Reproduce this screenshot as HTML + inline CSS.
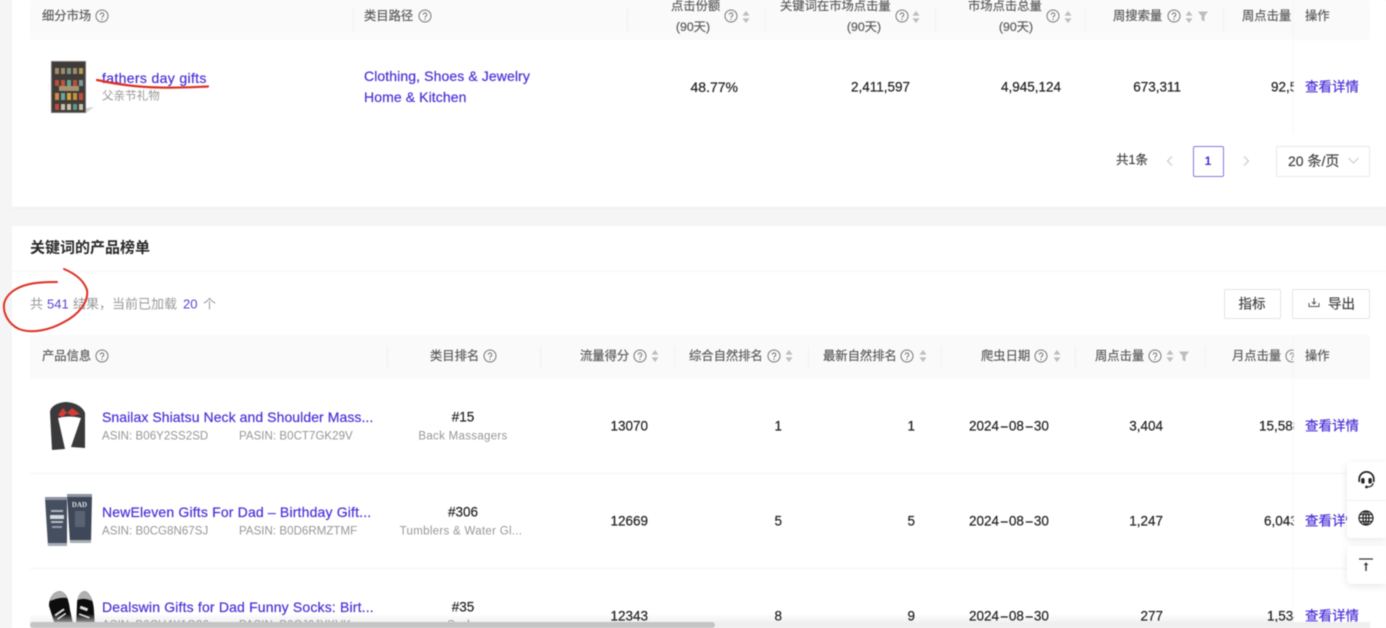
<!DOCTYPE html>
<html lang="zh"><head><meta charset="utf-8"><title>关键词的产品榜单</title>
<style>
*{box-sizing:border-box}
html,body{margin:0;padding:0;width:1386px;height:628px;overflow:hidden;background:#f5f5f5}
body{position:relative;font-family:"Liberation Sans","Noto Sans CJK SC",sans-serif;font-size:13px;color:#333}
#w{position:absolute;left:0;top:0;width:1386px;height:628px;overflow:hidden;filter:blur(.4px)}
.b{position:absolute}
.t{position:absolute;white-space:nowrap;line-height:1;transform:translateY(-50%);-webkit-text-stroke:.2px currentColor}
.c{transform:translate(-50%,-50%)}
.r{transform:translate(-100%,-50%)}
.h{color:#5c5c5c;font-size:12.3px}
.l{color:#4a2fd6;font-size:13.5px}
.g{color:#969696;font-size:11.5px;letter-spacing:.05px;-webkit-text-stroke:0}
.n{color:#222;font-size:13.5px}
.ti{font-size:14px;letter-spacing:.07px}
.dt i{font-style:normal;display:inline-block;transform:scaleX(2);margin:0 2.7px}
.d{position:absolute;width:1px;background:#f1f1f1}
svg{position:absolute;overflow:visible}
</style></head><body><div id="w">
<svg width="0" height="0" style="position:absolute"><defs>
<g id="q"><circle cx="6" cy="6" r="6" fill="none" stroke="#777" stroke-width="1"/><path d="M4.2 4.7a1.8 1.8 0 1 1 2.8 1.5c-.7.45-1 .8-1 1.5" fill="none" stroke="#777" stroke-width="1"/><circle cx="6" cy="9.3" r=".65" fill="#777"/></g>
<g id="s"><path d="M4 0 7.5 4.6H.5z" fill="#bdbdbd"/><path d="M4 12 .5 7.4h7z" fill="#bdbdbd"/></g>
<g id="f"><path d="M0 .5h10L6.5 5v5.5L3.5 9V5z" fill="#bdbdbd"/></g>
</defs></svg>

<!-- cards -->
<div class="b" style="left:12px;top:0;width:1374px;height:207px;background:#fff;box-shadow:0 1px 2px #eee"></div>
<div class="b" style="left:12px;top:226px;width:1374px;height:402px;background:#fff"></div>

<!-- table 1 header -->
<div class="b" style="left:30px;top:0;width:1340px;height:40px;background:#fafafa"></div>
<div class="d" style="left:353px;top:8px;height:24px"></div>
<div class="d" style="left:627px;top:8px;height:24px"></div>
<div class="d" style="left:765px;top:8px;height:24px"></div>
<div class="d" style="left:935px;top:8px;height:24px"></div>
<div class="d" style="left:1085px;top:8px;height:24px"></div>
<div class="d" style="left:1223px;top:8px;height:24px"></div>
<span class="t h" style="left:42px;top:16px">细分市场</span><svg style="left:96px;top:10px" width="12" height="12"><use href="#q"/></svg>
<span class="t h" style="left:364px;top:16px">类目路径</span><svg style="left:419px;top:10px" width="12" height="12"><use href="#q"/></svg>
<span class="t h" style="left:671px;top:6px">点击份额</span><span class="t h c" style="left:693px;top:27px">(90天)</span>
<svg style="left:725px;top:10px" width="12" height="12"><use href="#q"/></svg><svg style="left:742px;top:11px" width="8" height="12"><use href="#s"/></svg>
<span class="t h" style="left:780px;top:6px">关键词在市场点击量</span><span class="t h c" style="left:864px;top:27px">(90天)</span>
<svg style="left:896px;top:10px" width="12" height="12"><use href="#q"/></svg><svg style="left:912px;top:11px" width="8" height="12"><use href="#s"/></svg>
<span class="t h" style="left:968px;top:6px">市场点击总量</span><span class="t h c" style="left:1016px;top:27px">(90天)</span>
<svg style="left:1047px;top:10px" width="12" height="12"><use href="#q"/></svg><svg style="left:1064px;top:11px" width="8" height="12"><use href="#s"/></svg>
<span class="t h" style="left:1113px;top:16px">周搜索量</span><svg style="left:1168px;top:10px" width="12" height="12"><use href="#q"/></svg><svg style="left:1185px;top:11px" width="8" height="12"><use href="#s"/></svg><svg style="left:1198px;top:11px" width="10" height="11"><use href="#f"/></svg>
<span class="t h" style="left:1242px;top:16px">周点击量</span>

<!-- table 1 row -->
<svg style="left:51px;top:61px" width="42" height="54" viewBox="0 0 42 54">
<path d="M35 47 43 46 35 52z" fill="#d4d4d4"/>
<rect width="35" height="52" fill="#3f3b38"/>
<rect x=".5" y=".5" width="34" height="51" fill="none" stroke="#77726e"/>
<g fill="#a08c6c"><rect x="4" y="7" width="4" height="6"/><rect x="10" y="7" width="4" height="6"/><rect x="16" y="7" width="4" height="6" fill="#7f9484"/><rect x="22" y="7" width="4" height="6"/><rect x="28" y="7" width="4" height="6" fill="#b4985a"/></g>
<g><rect x="4" y="19" width="4" height="6" fill="#b8503c"/><rect x="10" y="19" width="4" height="6" fill="#c0563c"/><rect x="16" y="19" width="4" height="6" fill="#5ea79a"/><rect x="22" y="19" width="4" height="6" fill="#b8503c"/><rect x="28" y="19" width="4" height="6" fill="#7f9aa0"/></g>
<rect x="8" y="25" width="20" height="5" fill="#a89270"/>
<g><rect x="4" y="32" width="4" height="7" fill="#d08a4a"/><rect x="10" y="32" width="4" height="7" fill="#6aa6a0"/><rect x="16" y="32" width="4" height="7" fill="#d0a63c"/><rect x="22" y="32" width="4" height="7" fill="#c9913c"/><rect x="28" y="32" width="4" height="7" fill="#c0503c"/></g>
<g><rect x="4" y="43" width="4" height="6" fill="#c04a3c"/><rect x="10" y="43" width="4" height="6" fill="#c9c0a8"/><rect x="16" y="43" width="4" height="6" fill="#c9c0a8"/><rect x="22" y="43" width="4" height="6" fill="#5e9a90"/><rect x="28" y="43" width="4" height="6" fill="#c9c0a8"/></g>
</svg>
<span class="t l ti" style="left:102px;top:78px;letter-spacing:.35px">fathers day gifts</span>
<span class="t g" style="left:102px;top:97px">父亲节礼物</span>
<span class="t l ti" style="left:364px;top:76px;letter-spacing:.1px">Clothing, Shoes &amp; Jewelry</span>
<span class="t l ti" style="left:364px;top:97px;letter-spacing:.1px">Home &amp; Kitchen</span>
<span class="t r n" style="left:738px;top:87px;font-size:14px">48.77%</span>
<span class="t r n" style="left:910px;top:87px">2,411,597</span>
<span class="t r n" style="left:1061px;top:87px">4,945,124</span>
<span class="t r n" style="left:1181px;top:87px">673,311</span>
<span class="t n" style="left:1271px;top:87px">92,580</span>

<!-- sticky 1 -->
<div class="b" style="left:1294px;top:40px;width:92px;height:95px;background:#fff;box-shadow:-2px 0 4px -2px #f4f4f4"></div>
<div class="b" style="left:1294px;top:0;width:76px;height:40px;background:#fafafa;box-shadow:-2px 0 4px -2px #f0f0f0"></div>
<span class="t h" style="left:1305px;top:16px">操作</span>
<span class="t l" style="left:1305px;top:87px">查看详情</span>

<!-- pagination -->
<span class="t" style="left:1116px;top:160px;font-size:12.5px;color:#444">共1条</span>
<svg style="left:1166px;top:156px" width="8" height="10"><path d="M6 .5 1.5 5 6 9.5" fill="none" stroke="#c4c4c4" stroke-width="1"/></svg>
<div class="b" style="left:1193px;top:146px;width:31px;height:31px;border:1px solid #8a76e0;border-radius:2px;background:#fff"></div>
<span class="t c l" style="left:1208px;top:161px;font-weight:bold;font-size:12px;-webkit-text-stroke:0">1</span>
<svg style="left:1242px;top:156px" width="8" height="10"><path d="M2 .5 6.5 5 2 9.5" fill="none" stroke="#c4c4c4" stroke-width="1"/></svg>
<div class="b" style="left:1276px;top:146px;width:94px;height:31px;border:1px solid #e8e8e8;border-radius:2px;background:#fff"></div>
<span class="t" style="left:1288px;top:161px;font-size:14px;color:#444">20 条/页</span>
<svg style="left:1348px;top:157px" width="11" height="7"><path d="M.5 1 5.5 6 10.5 1" fill="none" stroke="#c8c8c8" stroke-width="1"/></svg>

<!-- card 2 top -->
<span class="t" style="left:30px;top:248px;font-size:15px;font-weight:bold;color:#2a2a2a;-webkit-text-stroke:0">关键词的产品榜单</span>
<div class="b" style="left:12px;top:271px;width:1374px;height:1px;background:#f7f7f7"></div>
<span class="t" style="left:30px;top:304px;color:#999;-webkit-text-stroke:0">共</span>
<span class="t" style="left:47px;top:304px;color:#5a44d0;-webkit-text-stroke:0">541</span>
<span class="t" style="left:73px;top:304px;color:#999;-webkit-text-stroke:0">结果，当前已加载</span>
<span class="t" style="left:183px;top:304px;color:#5a44d0;-webkit-text-stroke:0">20</span>
<span class="t" style="left:203px;top:304px;color:#999;-webkit-text-stroke:0">个</span>
<div class="b" style="left:1224px;top:289px;width:57px;height:30px;border:1px solid #e4e4e4;border-radius:2px;background:#fff"></div>
<span class="t c" style="left:1252px;top:304px;color:#444;font-size:13.5px">指标</span>
<div class="b" style="left:1292px;top:289px;width:78px;height:30px;border:1px solid #e4e4e4;border-radius:2px;background:#fff"></div>
<svg style="left:1308px;top:297px" width="12" height="11"><path d="M1 6v3.5h10V6M6 1v5.5M4 5l2 2 2-2" fill="none" stroke="#555" stroke-width="1"/></svg>
<span class="t" style="left:1328px;top:304px;color:#444;font-size:13.5px">导出</span>

<!-- table 2 header -->
<div class="b" style="left:30px;top:335px;width:1340px;height:44px;background:#fafafa"></div>
<div class="d" style="left:387px;top:346px;height:22px"></div>
<div class="d" style="left:540px;top:346px;height:22px"></div>
<div class="d" style="left:674px;top:346px;height:22px"></div>
<div class="d" style="left:808px;top:346px;height:22px"></div>
<div class="d" style="left:941px;top:346px;height:22px"></div>
<div class="d" style="left:1075px;top:346px;height:22px"></div>
<div class="d" style="left:1205px;top:346px;height:22px"></div>
<span class="t h" style="left:42px;top:356px">产品信息</span><svg style="left:96px;top:350px" width="12" height="12"><use href="#q"/></svg>
<span class="t h" style="left:430px;top:356px">类目排名</span><svg style="left:484px;top:350px" width="12" height="12"><use href="#q"/></svg>
<span class="t h" style="left:580px;top:356px">流量得分</span><svg style="left:634px;top:350px" width="12" height="12"><use href="#q"/></svg><svg style="left:651px;top:350px" width="8" height="12"><use href="#s"/></svg>
<span class="t h" style="left:689px;top:356px">综合自然排名</span><svg style="left:768px;top:350px" width="12" height="12"><use href="#q"/></svg><svg style="left:785px;top:350px" width="8" height="12"><use href="#s"/></svg>
<span class="t h" style="left:823px;top:356px">最新自然排名</span><svg style="left:901px;top:350px" width="12" height="12"><use href="#q"/></svg><svg style="left:919px;top:350px" width="8" height="12"><use href="#s"/></svg>
<span class="t h" style="left:981px;top:356px">爬虫日期</span><svg style="left:1035px;top:350px" width="12" height="12"><use href="#q"/></svg><svg style="left:1053px;top:350px" width="8" height="12"><use href="#s"/></svg>
<span class="t h" style="left:1095px;top:356px">周点击量</span><svg style="left:1149px;top:350px" width="12" height="12"><use href="#q"/></svg><svg style="left:1166px;top:350px" width="8" height="12"><use href="#s"/></svg><svg style="left:1179px;top:351px" width="10" height="11"><use href="#f"/></svg>
<span class="t h" style="left:1232px;top:356px">月点击量</span><svg style="left:1286px;top:350px" width="12" height="12"><use href="#q"/></svg>

<!-- row lines -->
<div class="b" style="left:30px;top:473px;width:1340px;height:1px;background:#f4f4f4"></div>
<div class="b" style="left:30px;top:568px;width:1340px;height:1px;background:#f4f4f4"></div>

<!-- product images -->
<svg style="left:47px;top:402px" width="42" height="50" viewBox="0 0 42 50">
<path d="M18 0C10 1 4 4 3 10L5 48 18 47 11 16Q22 13 34 16L24 45 38 46 38 11C36 5 28 0 18 0Z" fill="#3a3a3c"/>
<path d="M11 13 16 6 20 11 25 6 33 12 25 14 20 11 15 15Z" fill="#d63a34"/>
</svg>
<svg style="left:45px;top:494px" width="48" height="53" viewBox="0 0 48 53">
<path d="M0 4H22V52H3Z" fill="#454f60"/>
<path d="M22 1H47L46 49H25Z" fill="#3e4858"/>
<rect x="0" y="3" width="22" height="3" fill="#8d949e"/>
<rect x="22" y="0" width="25" height="3" fill="#8d949e"/>
<rect x="3" y="49" width="19" height="3" fill="#a6acb4"/>
<rect x="25" y="46" width="21" height="3" fill="#a6acb4"/>
<rect x="6" y="16" width="12" height="2" fill="#aeb4bc"/><rect x="5" y="21" width="14" height="4" fill="#d5d8dc"/><rect x="6" y="27" width="12" height="2" fill="#b8bdc4"/><rect x="7" y="32" width="10" height="2" fill="#959ca6"/>
<text x="34.5" y="13" font-size="7" font-weight="bold" fill="#dfe2e6" text-anchor="middle" font-family="Liberation Serif,serif">DAD</text><rect x="30" y="17" width="10" height="16" fill="#596373"/>
</svg>
<svg style="left:48px;top:590px" width="48" height="38" viewBox="0 0 48 38">
<path d="M12 1C6 1 1 8 1 16L8 38H26L22 20C21 10 18 2 12 1Z" fill="#0d0d0d"/>
<path d="M12 1C7 1 3 6 2 11 7 9 13 7 19 8 17 4 15 1 12 1Z" fill="#b0b0b0"/>
<path d="M37 1C32 1 29 8 29 14L28 38H47L46 22C46 12 42 2 37 1Z" fill="#0d0d0d"/>
<path d="M37 1C33 1 30 5 29.500 10 34 8 40 9 44 11 43 6 40 1 37 1Z" fill="#b0b0b0"/>
<g fill="#e0e0e0"><rect x="6" y="21" width="11" height="2" transform="rotate(-35 12 22)"/><rect x="9" y="26" width="10" height="1.5" transform="rotate(-35 13 27)"/><rect x="32" y="17" width="8" height="3" transform="rotate(20 36 18)"/><rect x="31" y="25" width="11" height="1.5" transform="rotate(20 36 25)"/></g>
</svg>

<!-- fade -->
<div class="b" style="left:30px;top:614px;width:1340px;height:8px;background:linear-gradient(rgba(240,240,240,0),rgba(232,232,232,.6))"></div>

<!-- rows -->
<span class="t l ti" style="left:102px;top:417px">Snailax Shiatsu Neck and Shoulder Mass...</span>
<span class="t g" style="left:102px;top:437px">ASIN: B06Y2SS2SD</span><span class="t g" style="left:239px;top:437px">PASIN: B0CT7GK29V</span>
<span class="t c n" style="left:463px;top:417px">#15</span><span class="t c g" style="left:463px;top:437px;letter-spacing:.3px">Back Massagers</span>
<span class="t r n" style="left:648px;top:426px">13070</span><span class="t r n" style="left:782px;top:426px">1</span><span class="t r n" style="left:915px;top:426px">1</span>
<span class="t n dt" style="left:969px;top:426px">2024<i>-</i>08<i>-</i>30</span><span class="t r n" style="left:1163px;top:426px">3,404</span><span class="t n" style="left:1259px;top:426px">15,588</span>

<span class="t l ti" style="left:102px;top:512px;letter-spacing:.17px">NewEleven Gifts For Dad – Birthday Gift...</span>
<span class="t g" style="left:102px;top:532px">ASIN: B0CG8N67SJ</span><span class="t g" style="left:239px;top:532px">PASIN: B0D6RMZTMF</span>
<span class="t c n" style="left:463px;top:512px">#306</span><span class="t c g" style="left:461px;top:532px;letter-spacing:.3px">Tumblers &amp; Water Gl...</span>
<span class="t r n" style="left:648px;top:521px">12669</span><span class="t r n" style="left:782px;top:521px">5</span><span class="t r n" style="left:915px;top:521px">5</span>
<span class="t n dt" style="left:969px;top:521px">2024<i>-</i>08<i>-</i>30</span><span class="t r n" style="left:1163px;top:521px">1,247</span><span class="t n" style="left:1264px;top:521px">6,043</span>

<span class="t l ti" style="left:102px;top:607px;letter-spacing:.17px">Dealswin Gifts for Dad Funny Socks: Birt...</span>
<span class="t g" style="left:102px;top:626px">ASIN: B0CH4X1Q36</span><span class="t g" style="left:239px;top:626px">PASIN: B0CJ6JYKVK</span>
<span class="t c n" style="left:463px;top:607px">#35</span><span class="t c g" style="left:463px;top:626px">Socks</span>
<span class="t r n" style="left:648px;top:616px">12343</span><span class="t r n" style="left:782px;top:616px">8</span><span class="t r n" style="left:915px;top:616px">9</span>
<span class="t n dt" style="left:969px;top:616px">2024<i>-</i>08<i>-</i>30</span><span class="t r n" style="left:1163px;top:616px">277</span><span class="t n" style="left:1267px;top:616px">1,534</span>

<!-- sticky 2 -->
<div class="b" style="left:1294px;top:379px;width:92px;height:249px;background:#fff;box-shadow:-2px 0 4px -2px #f4f4f4"></div>
<div class="b" style="left:1294px;top:335px;width:76px;height:44px;background:#fafafa;box-shadow:-2px 0 4px -2px #f0f0f0"></div>
<div class="b" style="left:1294px;top:473px;width:76px;height:1px;background:#f4f4f4"></div>
<div class="b" style="left:1294px;top:568px;width:76px;height:1px;background:#f4f4f4"></div>
<span class="t h" style="left:1305px;top:356px">操作</span>
<span class="t l" style="left:1305px;top:426px">查看详情</span>
<span class="t l" style="left:1305px;top:521px">查看详情</span>
<span class="t l" style="left:1305px;top:616px">查看详情</span>

<!-- scrollbar -->
<div class="b" style="left:30px;top:622px;width:1340px;height:6px;background:#efefef"></div>
<div class="b" style="left:30px;top:622px;width:685px;height:6px;background:rgba(190,190,190,.88);border-radius:3px"></div>

<!-- floating widgets -->
<div class="b" style="left:1347px;top:462px;width:39px;height:76px;background:#fff;border-radius:4px 0 0 4px;box-shadow:0 2px 8px rgba(0,0,0,.1)"></div>
<div class="b" style="left:1347px;top:500px;width:39px;height:1px;background:#f2f2f2"></div>
<div class="b" style="left:1347px;top:546px;width:39px;height:38px;background:#fff;border-radius:4px 0 0 4px;box-shadow:0 2px 8px rgba(0,0,0,.1)"></div>
<svg style="left:1358px;top:471px" width="17" height="18" viewBox="0 0 17 18"><path d="M1.2 11V8.2a7.3 7.3 0 0 1 14.6 0V11" fill="none" stroke="#222" stroke-width="1.7"/><rect x="3.2" y="7" width="3.4" height="5.6" rx="1.6" fill="#222"/><rect x="10.4" y="7" width="3.4" height="5.6" rx="1.6" fill="#222"/><path d="M15 12c0 2.4-2.2 4-5.4 4" fill="none" stroke="#222" stroke-width="1.2"/><circle cx="8.5" cy="16" r="1.4" fill="#222"/></svg>
<svg style="left:1358px;top:510px" width="16" height="16" viewBox="0 0 16 16"><g fill="none" stroke="#222" stroke-width="1.2"><circle cx="8" cy="8" r="7"/><ellipse cx="8" cy="8" rx="3" ry="7"/><path d="M1 8H15M2 4.5H14M2 11.5H14M8 1V15"/></g></svg>
<svg style="left:1359px;top:558px" width="14" height="14" viewBox="0 0 14 14"><path d="M0 1H14" stroke="#333" stroke-width="1.2"/><path d="M7 13V5" stroke="#333" stroke-width="1.4"/><path d="M4.6 7 7 4.4 9.4 7z" fill="#333"/></svg>

<!-- red annotations -->
<svg style="left:0;top:0" width="1386" height="628">
<path d="M97 80C115 84 135 87 160 87.5 178 88 195 87 208 86.5" fill="none" stroke="#dc3023" stroke-width="2.2" stroke-linecap="round"/>
<path d="M64 269C76 274 84 281 87 290 89 302 78 315 64 322 50 330 32 334 19 329 8 324 3 313 4 304 6 294 16 287 30 284 39 282 49 282 57 282" fill="none" stroke="#dc3023" stroke-width="2" stroke-linecap="round"/>
</svg>
</div></body></html>
